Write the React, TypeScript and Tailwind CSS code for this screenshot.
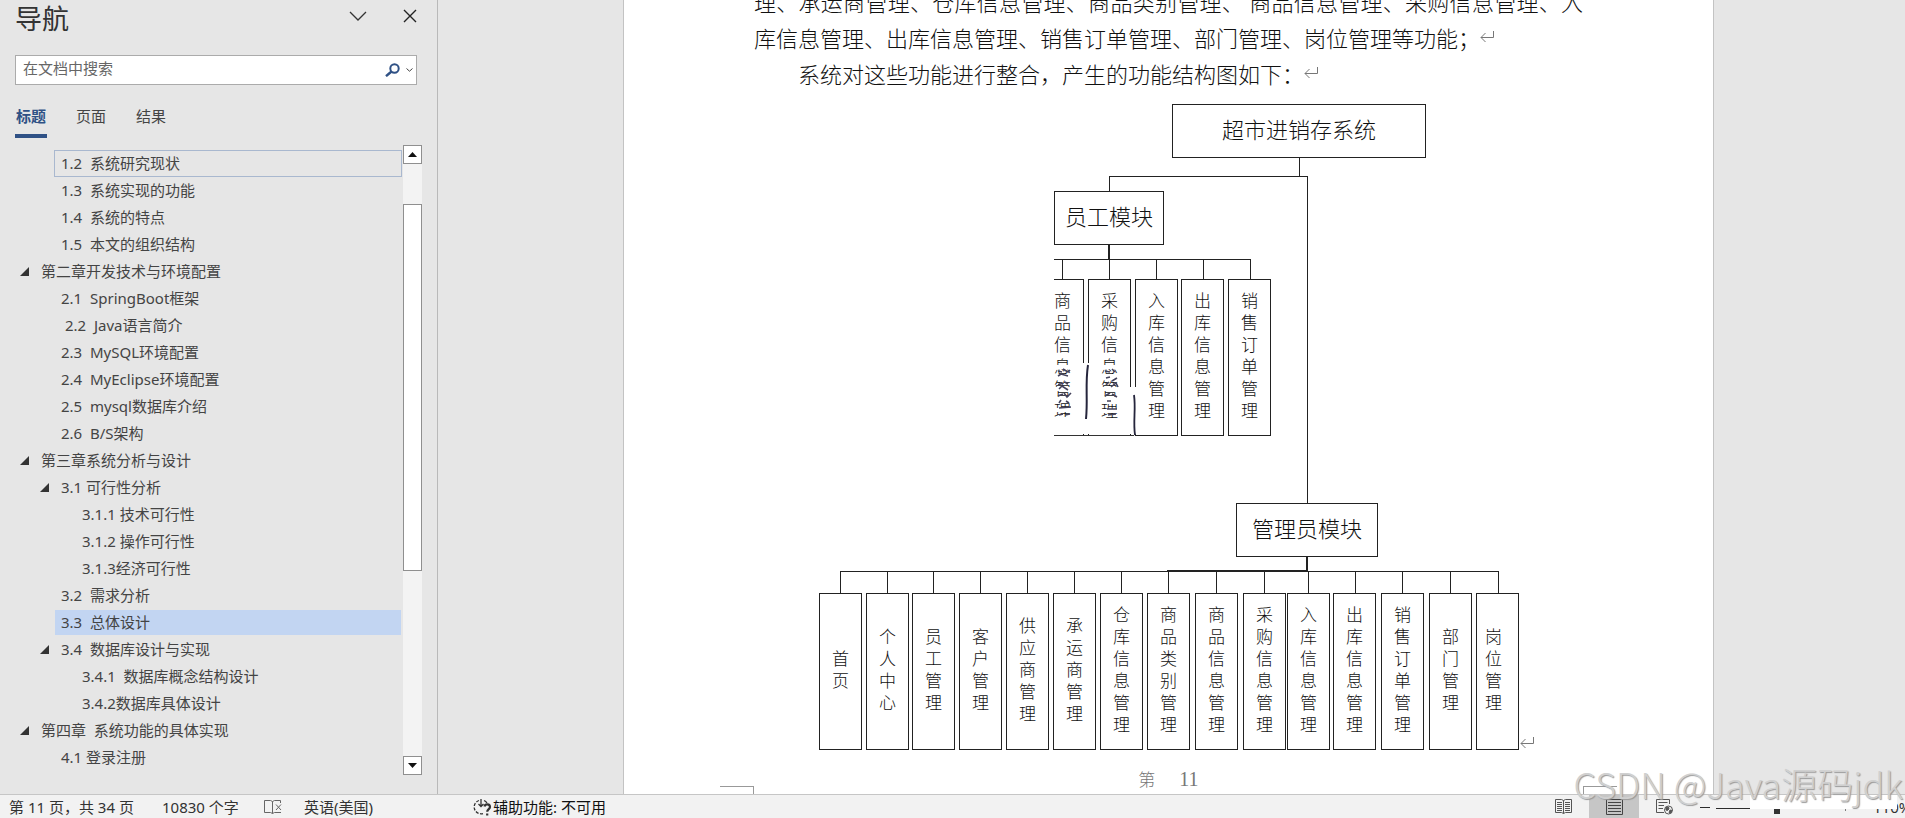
import { useState } from "react";

type Heading = {
  text: string;
  level: 1 | 2 | 3;
  open?: boolean;
  framed?: boolean;
};

const headings: Heading[] = [
  { text: "1.2  系统研究现状", level: 2, framed: true },
  { text: "1.3  系统实现的功能", level: 2 },
  { text: "1.4  系统的特点", level: 2 },
  { text: "1.5  本文的组织结构", level: 2 },
  { text: "第二章开发技术与环境配置", level: 1, open: true },
  { text: "2.1  SpringBoot框架", level: 2 },
  { text: " 2.2  Java语言简介", level: 2 },
  { text: "2.3  MySQL环境配置", level: 2 },
  { text: "2.4  MyEclipse环境配置", level: 2 },
  { text: "2.5  mysql数据库介绍", level: 2 },
  { text: "2.6  B/S架构", level: 2 },
  { text: "第三章系统分析与设计", level: 1, open: true },
  { text: "3.1 可行性分析", level: 2, open: true },
  { text: "3.1.1 技术可行性", level: 3 },
  { text: "3.1.2 操作可行性", level: 3 },
  { text: "3.1.3经济可行性", level: 3 },
  { text: "3.2  需求分析", level: 2 },
  { text: "3.3  总体设计", level: 2 },
  { text: "3.4  数据库设计与实现", level: 2, open: true },
  { text: "3.4.1  数据库概念结构设计", level: 3 },
  { text: "3.4.2数据库具体设计", level: 3 },
  { text: "第四章  系统功能的具体实现", level: 1, open: true },
  { text: "4.1 登录注册", level: 2 },
];

// left edge of each box on the diagram canvas
const staffNodes = [
  { text: "采购信息管理", x: 270 },
  { text: "入库信息管理", x: 317 },
  { text: "出库信息管理", x: 363 },
  { text: "销售订单管理", x: 410 },
];

const adminNodes = [
  { text: "首页", x: 1 },
  { text: "个人中心", x: 48 },
  { text: "员工管理", x: 94 },
  { text: "客户管理", x: 141 },
  { text: "供应商管理", x: 188 },
  { text: "承运商管理", x: 235 },
  { text: "仓库信息管理", x: 282 },
  { text: "商品类别管理", x: 329 },
  { text: "商品信息管理", x: 377 },
  { text: "采购信息管理", x: 425 },
  { text: "入库信息管理", x: 469 },
  { text: "出库信息管理", x: 515 },
  { text: "销售订单管理", x: 563 },
  { text: "部门管理", x: 611 },
  { text: "岗位管理", x: 658 },
];

const indent = { 1: "pl-[14px]", 2: "pl-[34px]", 3: "pl-[55px]" };

const ReturnMark = () => (
  <svg className="inline-block h-3 w-3.5" viewBox="0 0 14 12" fill="none" stroke="#777">
    <path d="M13.5 0V6.5H1M5.5 2L1 6.5L5.5 11" />
  </svg>
);

const NavigationPane = () => {
  const [tab, setTab] = useState("标题");
  const [current, setCurrent] = useState(17);

  return (
    <aside className="flex w-[438px] shrink-0 flex-col border-r border-[#b9b9b9] px-[15px] text-[15px] text-[#444]">
      <div className="flex h-[38px] items-center">
        <h1 className="flex-1 text-[27px] leading-[38px] text-[#333]">导航</h1>
        <button aria-label="任务窗格选项" className="mb-1.5 mr-9">
          <svg className="h-3 w-[18px]" viewBox="0 0 18 12" fill="none" stroke="#333" strokeWidth="1.3">
            <path d="M1 2L9 10L17 2" />
          </svg>
        </button>
        <button aria-label="关闭" className="mb-1.5 mr-[5px]">
          <svg className="h-3.5 w-3.5" viewBox="0 0 14 14" fill="none" stroke="#222" strokeWidth="1.4">
            <path d="M1 1L13 13M13 1L1 13" />
          </svg>
        </button>
      </div>

      <div className="mr-[5px] mt-[17px] flex h-[30px] items-center border border-[#ababab] bg-white">
        <input
          aria-label="在文档中搜索"
          placeholder="在文档中搜索"
          className="min-w-0 flex-1 bg-transparent pb-1 pl-[7px] outline-none placeholder:text-[#666]"
        />
        <button aria-label="搜索" className="mr-1.5">
          <svg className="h-3.5 w-[15px]" viewBox="0 0 15 14" fill="none" stroke="#2f5185" strokeWidth="2">
            <circle cx="9.5" cy="5.5" r="4.2" />
            <path d="M6.5 8.5L1 13.2" strokeWidth="2.4" />
          </svg>
        </button>
        <button aria-label="搜索选项" className="mr-[3px]">
          <svg className="h-1 w-[7px]" viewBox="0 0 7 4" fill="none" stroke="#444">
            <path d="M0.5 0.5L3.5 3.2L6.5 0.5" />
          </svg>
        </button>
      </div>

      <div className="mt-4 flex gap-7">
        {["标题", "页面", "结果"].map((name) => (
          <button
            key={name}
            onClick={() => setTab(name)}
            className={
              tab === name
                ? "h-[37px] w-8 border-b-4 border-[#2f5185] pb-0.5 font-bold text-[#2f5185]"
                : "h-[37px] w-8 border-b-4 border-transparent pb-0.5"
            }
          >
            {name}
          </button>
        ))}
      </div>

      <div className="mt-[7px] flex">
        <ul className="flex-1 pt-[5px]">
          {headings.map((item, i) => (
            <li key={item.text} className={`-ml-[15px] flex h-[27px] items-center ${indent[item.level]}`}>
              <span className="flex w-5 shrink-0 justify-center">
                {item.open && (
                  <svg className="h-[9px] w-[9px]" viewBox="0 0 9 9">
                    <path d="M9 0V9H0Z" fill="#333" />
                  </svg>
                )}
              </span>
              <button
                onClick={() => setCurrent(i)}
                className={`flex h-full flex-1 items-center whitespace-pre border pl-1.5 text-left ${
                  item.framed
                    ? "border-[#a9b8cf]"
                    : current === i
                      ? "border-[#e6e6e6] bg-[#c2d5f2]"
                      : "border-transparent"
                }`}
              >
                {item.text}
              </button>
            </li>
          ))}
        </ul>
        <div className="ml-px flex h-[630px] w-[19px] flex-col bg-[#f3f3f3]">
          <button aria-label="向上滚动" className="flex h-[19px] items-center justify-center border border-[#8f8f8f] bg-white">
            <svg className="h-[5px] w-[9px]" viewBox="0 0 9 5">
              <path d="M4.5 0L9 5H0Z" fill="#111" />
            </svg>
          </button>
          <div className="mt-10 h-[367px] border border-[#8f8f8f] bg-white" />
          <button aria-label="向下滚动" className="mt-auto flex h-[19px] items-center justify-center border border-[#8f8f8f] bg-white">
            <svg className="h-[5px] w-[9px]" viewBox="0 0 9 5">
              <path d="M4.5 5L9 0H0Z" fill="#111" />
            </svg>
          </button>
        </div>
      </div>
    </aside>
  );
};

const columnNode =
  "absolute flex h-[157px] w-[43px] items-center justify-center border border-[#222] pb-1.5 text-[17px] leading-[22px]";
const titleNode = "absolute flex h-[54px] items-center justify-center border border-[#222] pb-1.5 text-[22px]";

const StructureDiagram = () => (
  <div className="relative ml-16 h-[645px] w-[702px]">
    <svg className="absolute inset-0 h-full w-full" viewBox="0 0 702 645" fill="none" stroke="#222" shapeRendering="crispEdges">
      <path d="M481.5 53V72.5M291.5 88V72.5H489.5V400" />
      <path d="M291.5 141V176M236 155.5H432.5V176M244.5 155V176M338.5 155V176M385.5 155V176" />
      <path d="M291 141V155" strokeWidth="2" />
      <path d="M489 452V467M349 467H489" strokeWidth="2" />
      <path d="M22.5 489V467.5H680.5V489" />
      <path d="M69.5 467V489M115.5 467V489M162.5 467V489M209.5 467V489M256.5 467V489M303.5 467V489M350.5 467V489M398.5 467V489M446.5 467V489M490.5 467V489M537.5 467V489M584.5 467V489M632.5 467V489" />
    </svg>

    <div className={`${titleNode} left-[354px] top-0 w-[254px]`}>超市进销存系统</div>
    <div className={`${titleNode} left-[236px] top-[87px] w-[110px]`}>员工模块</div>
    <div className={`${titleNode} left-[418px] top-[399px] w-[142px]`}>管理员模块</div>

    <div className="absolute left-[236px] top-[175px] flex h-[157px] w-[30px] items-center border-y border-r border-[#222] pb-1.5 text-[17px] leading-[22px]">
      <span className="w-[17px]">商品信息管理</span>
    </div>
    {staffNodes.map((node) => (
      <div key={node.x} className={`${columnNode} top-[175px]`} style={{ left: node.x }}>
        <span className="w-[17px]">{node.text}</span>
      </div>
    ))}
    {adminNodes.map((node) => (
      <div key={node.x} className={`${columnNode} top-[489px] last-of-type:pr-2`} style={{ left: node.x }}>
        <span className="w-[17px]">{node.text}</span>
      </div>
    ))}

    {/* rubbed out part of the first two boxes */}
    <svg className="absolute left-[236px] top-[255px] h-[78px] w-[84px]" viewBox="0 0 84 78" fill="none">
      <path d="M28 4H37V75H28Z M75 28H82V75H75Z" fill="#fff" />
      <path d="M0 8H26M38 8H73M0 18H26M38 17H73M0 30H26M38 30H73M0 42H26M38 43H73M0 51H26M38 52H73M0 60H26M38 61H73" stroke="#fff" strokeWidth="4" />
      <path
        d="M4 12l4 1M9 10l5 3 2-2M4 17l3-2 7 2M4 26l5-2M11 23l3 2M5 30l3-3 6 4M4 37l5-2M10 34l3 4 4-4M5 44l2-3M12 42l3 2M5 49l12-1M5 56l4-1M11 56l5-1M51 12l5 1M58 10l3 3M52 19l4-1M58 22l5-3M52 26l3-3M57 28l5-4 2 4M51 37l5-3M58 35l5 3M53 42h4M53 50h10M54 56l8-1"
        stroke="#44435c"
        strokeWidth="1.6"
      />
      <path d="M34 6C31 25 34 40 32 60" stroke="#25253c" strokeWidth="2" />
      <path d="M80 36C82 50 79 62 81 76" stroke="#25253c" strokeWidth="1.8" />
      <path d="M0 76.5H80" stroke="#333" />
    </svg>

    <span className="absolute -right-[14px] top-[624px] leading-none">
      <ReturnMark />
    </span>
  </div>
);

const DocumentPage = () => (
  <div className="relative mx-auto flex w-[1091px] flex-col border-x border-[#c3c3c3] bg-white px-[130px] text-[22px] leading-9 text-[#111]">
    <div className="-mt-[17px]">
      <p className="whitespace-pre-wrap text-justify [text-align-last:justify]">
        理、承运商管理、仓库信息管理、商品类别管理、 商品信息管理、采购信息管理、入
      </p>
      <p className="flex items-center">
        库信息管理、出库信息管理、销售订单管理、部门管理、岗位管理等功能；
        <ReturnMark />
      </p>
      <p className="flex items-center pl-11">
        系统对这些功能进行整合，产生的功能结构图如下：
        <ReturnMark />
      </p>
    </div>
    <div className="mt-[13px]">
      <StructureDiagram />
    </div>
    <div className="mt-3 flex justify-center gap-6 text-[#777]">
      <span className="text-[17px]">第</span>
      <span className="font-['Liberation_Serif',serif] text-[20px]">11</span>
    </div>
    <div className="absolute bottom-0 left-24 h-2 w-[34px] border-r border-t border-[#999]" />
    <div className="absolute bottom-0 right-24 h-2 w-[34px] border-l border-t border-[#999]" />
  </div>
);

const StatusBar = () => (
  <footer className="flex h-6 items-center overflow-hidden border-t border-[#c6c6c6] bg-[#f2f2f2] pl-[9px] text-[15px] leading-6 text-[#333]">
    <span className="w-[153px]">第 11 页，共 34 页</span>
    <span className="w-[102px]">10830 个字</span>
    <svg className="mr-[22px] h-4 w-[18px]" viewBox="0 0 18 16" fill="none" stroke="#666">
      <path d="M8.5 14.5V2.5L6.5 1.5H0.5V13.5H6.5L8.5 14.5L10.5 13.5H17M8.5 2.5L10.5 1.5H16.5V4M12 5.5L17 11M17 5.5L12 11" />
    </svg>
    <span className="w-[169px]">英语(美国)</span>
    <svg className="mr-px h-[18px] w-[19px]" viewBox="0 0 19 18" fill="none" stroke="#333" strokeWidth="1.3">
      <path d="M6 2.5A6.5 6.500 0 1 0 10 15.500" strokeDasharray="3 1.5" />
      <path d="M8 1V8.500M5.500 6L8 8.500L10.500 6M11 2.500A6 6 0 0 1 14 5" />
      <path d="M11.5 8.5C12 5.5 17 5.5 17 9C17 11 14.2 11.3 14.2 13.8M14.2 15.5V17.5" strokeWidth="2.2" />
    </svg>
    <span className="flex-1 text-[#111]">辅助功能: 不可用</span>

    <button aria-label="阅读视图" className="mr-[17px]">
      <svg className="h-[15px] w-[17px]" viewBox="0 0 17 15" fill="none" stroke="#555">
        <path d="M8.5 14.5V1.5L6.5 0.5H0.5V13.5H6.5L8.5 14.5L10.5 13.5H16.5V0.5H10.5L8.5 1.5M2 3.5H7M2 5.5H7M2 7.5H7M2 9.5H7M2 11.5H7M10 3.5H15M10 5.5H15M10 7.5H15M10 9.5H15M10 11.5H15" />
      </svg>
    </button>
    <button aria-label="页面视图" className="mr-[17px] flex h-full w-[50px] items-center justify-center bg-[#c6c6c6]">
      <svg className="h-4 w-[17px]" viewBox="0 0 17 16" fill="none" stroke="#444">
        <path d="M0.5 0.5H16.5V15.5H0.5ZM2 3.5H15M2 6.5H15M2 9.5H15M2 12.5H15" />
      </svg>
    </button>
    <button aria-label="Web 版式视图" className="mr-[23px]">
      <svg className="h-4 w-[17px]" viewBox="0 0 17 16" fill="none" stroke="#555">
        <path d="M8 13.5H0.5V0.5H13.5V5M2.5 3.5H11.5M2.5 6.5H8M2.5 9.5H7" />
        <circle cx="12.5" cy="11" r="4" fill="#f2f2f2" />
        <path d="M10 8.500L12.500 8L13 10L11.500 11.500L10 11ZM14 11L16 11.500L14.500 14L13 13.500Z" fill="#555" />
      </svg>
    </button>
    <div className="relative flex h-full w-[209px] shrink-0 items-center">
      <svg className="h-full w-full" viewBox="0 0 209 24" shapeRendering="crispEdges">
        <path d="M0 13.500H10M16 14.500H54" stroke="#222" />
        <path d="M77 14H83V20H77Z" fill="#333" />
        <path d="M151.500 14V17" stroke="#777" />
      </svg>
      <span className="absolute left-[177px] top-0">110%</span>
      <div className="absolute left-[54px] top-0 h-[14px] w-[147px] bg-white" />
    </div>
  </footer>
);

export default function App() {
  return (
    <div className="relative flex h-screen flex-col overflow-hidden bg-[#e6e6e6] font-['Noto_Sans','Noto_Sans_CJK_SC',sans-serif]">
      <div className="flex min-h-0 flex-1">
        <NavigationPane />
        <main className="flex min-w-0 flex-1 overflow-hidden pr-1.5 font-['Noto_Sans_CJK_SC',sans-serif] font-light">
          <DocumentPage />
        </main>
      </div>
      <StatusBar />
      <div className="pointer-events-none absolute bottom-1 right-0.5 whitespace-nowrap font-['Noto_Sans_CJK_SC',sans-serif] text-[36px] font-light leading-[62px] text-[#d0d0d0] [text-shadow:1px_1px_1px_#999]">
        CSDN @Java源码jdk
      </div>
    </div>
  );
}
